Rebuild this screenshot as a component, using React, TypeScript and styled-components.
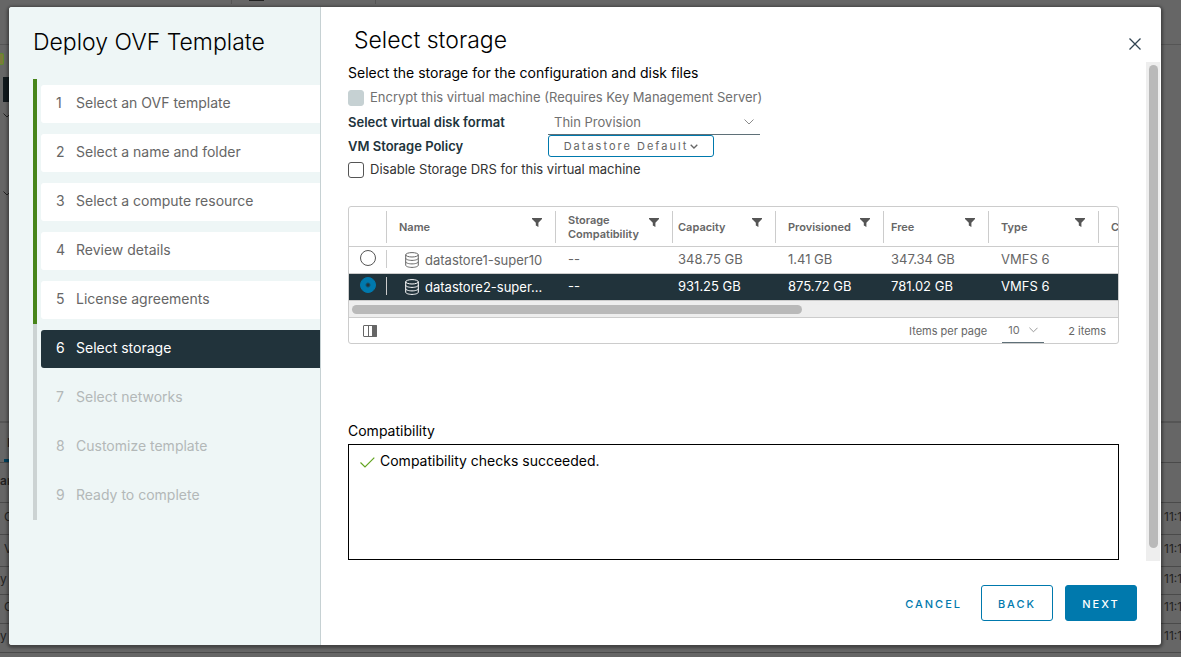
import React, { useState } from "react";
import styled, { createGlobalStyle } from "styled-components";

const GlobalStyle = createGlobalStyle`
  *, *::before, *::after { box-sizing: border-box; }
  body {
    margin: 0;
    background: #666;
    color: #000;
    font: 14px/24px Inter, "Open Sans", "Liberation Sans", sans-serif;
  }
  button, input, select { font: inherit; margin: 0; }
`;

const Page = styled.div`
  position: relative;
  display: flex;
  min-height: 100vh;
  padding: 7px 20px 12px 9px;
`;

/* Dimmed application behind the dialog */
const Backdrop = styled.div`
  position: absolute;
  inset: 0;
  display: flex;
  flex-direction: column;
  overflow: hidden;
  color: #222;
  font-size: 12px;
`;

const BackBar = styled.div`
  display: flex;
  flex: none;
  height: 45px;
  padding-left: 231px;
  border-bottom: 1px solid #555;
`;

const BackTab = styled.div<{ $width: number }>`
  display: flex;
  justify-content: center;
  width: ${(p) => p.$width}px;
  height: 4px;
  border-left: 1px solid #555;
`;

const BackTabMark = styled.div`
  width: 15px;
  height: 1px;
  margin-right: 94px;
  background: #222;
`;

const BackTree = styled.div`
  display: flex;
  flex: none;
  flex-direction: column;
  height: 376px;
  padding-top: 8px;
`;

const BackBadge = styled.div`
  width: 4px;
  height: 12px;
  border: 1px solid #5d8a2c;
  border-left: 0;
  border-radius: 0 2px 2px 0;
  background: #7d7a3a;
`;

const BackSelected = styled.div`
  width: 10px;
  height: 25px;
  margin: 12px 0 0 3px;
  background: #11191d;
`;

const BackChevron = styled.svg`
  flex: none;
  width: 8px;
  height: 5px;
  margin: 11px 0 62px 3px;
`;

const BackTabs = styled.div`
  display: flex;
  flex: none;
  height: 42px;
  border-top: 2px solid #555;
  border-bottom: 1px solid #4a4a4a;
`;

const BackActiveTab = styled.div`
  width: 40px;
  margin-left: 4px;
  padding: 8px 0 0 3px;
  border-bottom: 3px solid #00405c;
  color: #111;
`;

const BackRow = styled.div<{ $height: number; $indent?: boolean; $bold?: boolean }>`
  display: flex;
  flex: none;
  align-items: center;
  justify-content: space-between;
  height: ${(p) => p.$height}px;
  padding: 0 0 4px ${(p) => (p.$indent ? 4 : 0)}px;
  border-bottom: 1px solid #4a4a4a;
  font-weight: ${(p) => (p.$bold ? 600 : 400)};
`;

const BackTime = styled.span`
  width: 17px;
  white-space: nowrap;
`;

const Dialog = styled.div`
  position: relative;
  display: flex;
  flex: 1;
  min-width: 0;
  overflow: hidden;
  border-radius: 3px;
  background: #fff;
  box-shadow: 0 1px 3px 2px rgba(0, 0, 0, 0.35);
`;

const Sidebar = styled.nav`
  flex: none;
  width: 312px;
  padding: 20px 0 0 24px;
  border-right: 1px solid #c6d1d3;
  background: #eef6f6;
`;

const WizardTitle = styled.h1`
  margin: 0 0 22px;
  font-size: 23px;
  font-weight: 300;
  line-height: 30px;
`;

const Steps = styled.ol`
  margin: 0;
  padding: 0;
  list-style: none;
`;

type StepState = "done" | "current" | "todo";

const Step = styled.li<{ $state: StepState }>`
  padding: 6px 0 5px 4px;
  border-left: 4px solid ${(p) => (p.$state === "done" ? "#48851a" : "#ccd3d3")};
`;

const StepButton = styled.button<{ $state: StepState }>`
  display: flex;
  align-items: center;
  width: 100%;
  height: 38px;
  padding: 0 0 2px 15px;
  border: 0;
  border-radius: 3px 0 0 3px;
  background: ${(p) => ({ done: "#fff", current: "#21333b", todo: "transparent" })[p.$state]};
  color: ${(p) => ({ done: "#666", current: "#fff", todo: "#b3b8b8" })[p.$state]};
  font-size: 14px;
  text-align: left;
`;

const StepNumber = styled.span`
  width: 20px;
`;

const Main = styled.main`
  display: flex;
  flex: 1;
  flex-direction: column;
  min-width: 0;
`;

const Header = styled.header`
  display: flex;
  align-items: center;
  justify-content: space-between;
  height: 55px;
  padding: 10px 18px 0 33px;
`;

const PageTitle = styled.h2`
  margin: 0;
  font-size: 23px;
  font-weight: 300;
  line-height: 30px;
`;

const CloseButton = styled.button`
  display: flex;
  padding: 10px 2px 2px;
  border: 0;
  background: none;
`;

const ScrollArea = styled.div`
  display: flex;
  flex: 1;
`;

const Content = styled.div`
  flex: 1;
  min-width: 0;
  padding: 0 27px;
`;

const VerticalTrack = styled.div`
  width: 14px;
  margin-right: 1px;
  padding: 3px 2px 3px 3px;
  background: #eee;
`;

const VerticalThumb = styled.div`
  height: 98%;
  border-radius: 5px;
  background: #b9b9b9;
`;

const Intro = styled.p`
  margin: 0 0 2px;
  line-height: 22px;
`;

const FormRow = styled.div`
  display: flex;
  align-items: center;
  height: 24px;
`;

const CheckRow = styled.label<{ $disabled?: boolean }>`
  display: flex;
  align-items: center;
  gap: 6px;
  height: 24px;
  color: ${(p) => (p.$disabled ? "#707070" : "#333")};
  font-size: 13px;
`;

const CheckText = styled.span`
  padding-bottom: 2px;
  line-height: 20px;
`;

const Checkbox = styled.input`
  appearance: none;
  width: 16px;
  height: 16px;
  border: 1px solid #555;
  border-radius: 3px;
  background: #fff;
  &:disabled {
    border-color: #c6d1d3;
    background: #c6d1d3;
  }
  &:checked {
    border-color: #0079ad;
    background: #0079ad;
  }
`;

const FieldLabel = styled.label`
  width: 200px;
  color: #21333b;
  font-size: 13px;
  font-weight: 600;
`;

const SelectBox = styled.span<{ $width: number }>`
  position: relative;
  display: flex;
  align-items: center;
  width: ${(p) => p.$width}px;
  border-bottom: 1px solid #5f7078;
  color: #8c8c8c;
`;

const SelectChevron = styled.svg`
  position: absolute;
  right: 6px;
  pointer-events: none;
`;

const Select = styled.select<{ $size: number }>`
  appearance: none;
  width: 100%;
  height: 24px;
  padding: 0 6px;
  border: 0;
  background: none;
  color: #707070;
  font-size: ${(p) => p.$size}px;
`;

const PolicyButton = styled.button`
  display: flex;
  align-items: center;
  justify-content: center;
  gap: 2px;
  width: 166px;
  height: 22px;
  padding: 0;
  border: 1px solid #0079ad;
  border-radius: 3px;
  background: #fff;
  color: #666;
  font-size: 11px;
  letter-spacing: 2px;
`;

const Grid = styled.section`
  margin-top: 24px;
  border: 1px solid #ccc;
  border-radius: 3px;
  overflow: hidden;
`;

const Table = styled.table`
  width: 100%;
  border-collapse: collapse;
  table-layout: fixed;
  color: #666;
  font-size: 13px;
`;

const HeadCell = styled.th`
  height: 39px;
  padding: 4px 0 3px;
  border-bottom: 1px solid #ccc;
  font-size: 11px;
  font-weight: 600;
  line-height: 14px;
  text-align: left;
`;

const HeadInner = styled.div<{ $pad: number; $last?: boolean }>`
  display: flex;
  align-items: center;
  justify-content: space-between;
  height: 32px;
  padding: 0 13px 0 ${(p) => p.$pad}px;
  ${(p) => (p.$last ? "padding-right: 0;" : "border-right: 1px solid #ccc;")}
`;

const FilterButton = styled.button`
  display: flex;
  padding: 0 0 10px;
  border: 0;
  background: none;
`;

const Row = styled.tr<{ $selected: boolean }>`
  height: 27px;
  border-bottom: 1px solid #ccc;
  background: ${(p) => (p.$selected ? "#21333b" : "#fff")};
  color: ${(p) => (p.$selected ? "#fff" : "#666")};
`;

const Cell = styled.td<{ $pad: number }>`
  padding: 0 0 2px ${(p) => p.$pad}px;
  line-height: 20px;
  white-space: nowrap;
`;

const RadioWrap = styled.div`
  display: flex;
  align-items: center;
  justify-content: space-between;
  height: 18px;
  padding: 0 0 2px 11px;
  border-right: 1px solid #ccc;
`;

const Radio = styled.input`
  appearance: none;
  width: 16px;
  height: 16px;
  border: 1px solid #555;
  border-radius: 50%;
  background: #fff;
  &:checked {
    border-color: #0079ad;
    background: radial-gradient(circle, #21333b 1px, #0079ad 3px);
  }
`;

const StoreName = styled.div`
  display: flex;
  align-items: center;
  gap: 6px;
  padding: 2px 9px 0 6px;
`;

const HorizontalTrack = styled.div`
  height: 17px;
  padding: 4px 3px;
  border-bottom: 1px solid #ccc;
  background: #eee;
`;

const HorizontalThumb = styled.div`
  width: 59%;
  height: 9px;
  border-radius: 5px;
  background: #b9b9b9;
`;

const GridFooter = styled.footer`
  display: flex;
  align-items: center;
  height: 25px;
  padding: 0 12px 0 14px;
  color: #666;
  font-size: 11px;
`;

const ColumnsButton = styled.button`
  display: flex;
  margin-right: auto;
  padding: 0;
  border: 0;
  background: none;
`;

const PageSize = styled.label`
  display: flex;
  align-items: center;
  gap: 15px;
  margin-right: 24px;
`;

const CompatibilityTitle = styled.h3`
  margin: 74px 0 0;
  font-size: 14px;
  font-weight: 400;
  line-height: 26px;
`;

const CompatibilityBox = styled.div`
  display: flex;
  align-items: flex-start;
  gap: 5px;
  height: 116px;
  padding: 4px 11px;
  border: 1px solid #000;
`;

const CheckIcon = styled.svg`
  margin-top: 8px;
`;

const Actions = styled.footer`
  display: flex;
  gap: 12px;
  padding: 24px;
`;

const ActionButton = styled.button<{ $kind: "flat" | "outline" | "solid" }>`
  width: ${(p) => (p.$kind === "flat" ? "auto" : "72px")};
  height: 36px;
  margin-left: ${(p) => (p.$kind === "flat" ? "auto" : "0")};
  padding: 2px ${(p) => (p.$kind === "flat" ? 6 : 0)}px 0;
  border: 1px solid ${(p) => (p.$kind === "flat" ? "transparent" : "#0079ad")};
  border-radius: 3px;
  background: ${(p) => (p.$kind === "solid" ? "#0079ad" : "#fff")};
  color: ${(p) => (p.$kind === "solid" ? "#fff" : "#0079ad")};
  font-size: 11px;
  font-weight: 500;
  letter-spacing: 2px;
`;

const steps = [
  "Select an OVF template",
  "Select a name and folder",
  "Select a compute resource",
  "Review details",
  "License agreements",
  "Select storage",
  "Select networks",
  "Customize template",
  "Ready to complete",
];

const columns = [
  { label: "Name", width: 169, pad: 12 },
  { label: "Storage Compatibility", width: 117, pad: 12 },
  { label: "Capacity", width: 103, pad: 5 },
  { label: "Provisioned", width: 108, pad: 12 },
  { label: "Free", width: 105, pad: 7 },
  { label: "Type", width: 110, pad: 12 },
];

const datastores = [
  { name: "datastore1-super10", values: ["--", "348.75 GB", "1.41 GB", "347.34 GB", "VMFS 6"] },
  { name: "datastore2-super…", values: ["--", "931.25 GB", "875.72 GB", "781.02 GB", "VMFS 6"] },
];

const backRows = [
  { text: "C", height: 32, indent: true },
  { text: "V", height: 32, indent: true },
  { text: "y C", height: 28 },
  { text: "C", height: 29, indent: true },
  { text: "y C", height: 29 },
];

const FilterIcon = () => (
  <svg width="10" height="9" viewBox="0 0 10 9" fill="#555" aria-hidden="true">
    <path d="M0 0h10v1L6.4 4.8V9L3.8 7.6V4.8L0 1z" />
  </svg>
);

const StoreIcon = () => (
  <svg width="14" height="16" viewBox="0 0 14 16" fill="none" stroke="currentColor" aria-hidden="true">
    <ellipse cx="7" cy="2.8" rx="6.3" ry="2.2" />
    <path d="M.7 2.8v10.4c0 1.2 2.8 2.2 6.3 2.2s6.3-1 6.3-2.2V2.8M.7 6.2c0 1.2 2.8 2.2 6.3 2.2s6.3-1 6.3-2.2M.7 9.7c0 1.2 2.8 2.2 6.3 2.2s6.3-1 6.3-2.2" />
  </svg>
);

export default function App() {
  const [selected, setSelected] = useState(1);
  return (
    <>
      <GlobalStyle />
      <Page>
        <Backdrop aria-hidden="true">
          <BackBar>
            <BackTab $width={144}>
              <BackTabMark />
            </BackTab>
            <BackTab $width={100} />
          </BackBar>
          <BackTree>
            <BackBadge />
            <BackSelected />
            <BackChevron viewBox="0 0 8 5" fill="none" stroke="#222">
              <path d="M.5.5 4 4 7.5.5" />
            </BackChevron>
            <BackChevron viewBox="0 0 8 5" fill="none" stroke="#222">
              <path d="M.5.5 4 4 7.5.5" />
            </BackChevron>
          </BackTree>
          <BackTabs>
            <BackActiveTab>I</BackActiveTab>
          </BackTabs>
          <BackRow $height={40} $bold>
            am
          </BackRow>
          {backRows.map((row, i) => (
            <BackRow key={i} $height={row.height} $indent={row.indent}>
              <span>{row.text}</span>
              <BackTime>11:1</BackTime>
            </BackRow>
          ))}
        </Backdrop>

        <Dialog role="dialog" aria-labelledby="wizard-title">
          <Sidebar>
            <WizardTitle id="wizard-title">Deploy OVF Template</WizardTitle>
            <Steps>
              {steps.map((label, i) => {
                const state: StepState = i < 5 ? "done" : i === 5 ? "current" : "todo";
                return (
                  <Step key={label} $state={state}>
                    <StepButton type="button" $state={state} disabled={state === "todo"}>
                      <StepNumber>{i + 1}</StepNumber>
                      {label}
                    </StepButton>
                  </Step>
                );
              })}
            </Steps>
          </Sidebar>

          <Main>
            <Header>
              <PageTitle>Select storage</PageTitle>
              <CloseButton type="button" aria-label="Close">
                <svg width="12" height="12" viewBox="0 0 12 12" stroke="#314351" strokeWidth="1.3">
                  <path d="M.5.5l11 11M11.5.5l-11 11" />
                </svg>
              </CloseButton>
            </Header>

            <ScrollArea>
              <Content>
                <Intro>Select the storage for the configuration and disk files</Intro>
                <CheckRow $disabled>
                  <Checkbox type="checkbox" disabled />
                  <CheckText>Encrypt this virtual machine (Requires Key Management Server)</CheckText>
                </CheckRow>
                <FormRow>
                  <FieldLabel htmlFor="disk-format">Select virtual disk format</FieldLabel>
                  <SelectBox $width={212}>
                    <Select id="disk-format" $size={13}>
                      <option>Thin Provision</option>
                    </Select>
                    <SelectChevron width="10" height="6" viewBox="0 0 10 6" fill="none" stroke="currentColor">
                      <path d="M.5.5 5 5 9.5.5" />
                    </SelectChevron>
                  </SelectBox>
                </FormRow>
                <FormRow>
                  <FieldLabel htmlFor="storage-policy">VM Storage Policy</FieldLabel>
                  <PolicyButton id="storage-policy" type="button">
                    Datastore Default
                    <svg width="8" height="5" viewBox="0 0 8 5" fill="none" stroke="currentColor" strokeWidth="1.3">
                      <path d="M.7.7 4 4 7.3.7" />
                    </svg>
                  </PolicyButton>
                </FormRow>
                <CheckRow>
                  <Checkbox type="checkbox" />
                  <CheckText>Disable Storage DRS for this virtual machine</CheckText>
                </CheckRow>

                <Grid>
                  <Table>
                    <colgroup>
                      <col width={38} />
                      {columns.map((c) => (
                        <col key={c.label} width={c.width} />
                      ))}
                      <col />
                    </colgroup>
                    <thead>
                      <tr>
                        <HeadCell>
                          <HeadInner $pad={0} />
                        </HeadCell>
                        {columns.map((c) => (
                          <HeadCell key={c.label}>
                            <HeadInner $pad={c.pad}>
                              {c.label}
                              <FilterButton type="button" aria-label={`Filter ${c.label}`}>
                                <FilterIcon />
                              </FilterButton>
                            </HeadInner>
                          </HeadCell>
                        ))}
                        <HeadCell>
                          <HeadInner $pad={12} $last>
                            C
                          </HeadInner>
                        </HeadCell>
                      </tr>
                    </thead>
                    <tbody>
                      {datastores.map((store, i) => (
                        <Row key={store.name} $selected={i === selected}>
                          <Cell $pad={0}>
                            <RadioWrap>
                              <Radio
                                type="radio"
                                name="datastore"
                                aria-label={store.name}
                                checked={i === selected}
                                onChange={() => setSelected(i)}
                              />
                            </RadioWrap>
                          </Cell>
                          <Cell $pad={12}>
                            <StoreName>
                              <StoreIcon />
                              {store.name}
                            </StoreName>
                          </Cell>
                          {store.values.map((value, j) => (
                            <Cell key={j} $pad={columns[j + 1].pad}>
                              {value}
                            </Cell>
                          ))}
                          <Cell $pad={0} />
                        </Row>
                      ))}
                    </tbody>
                  </Table>
                  <HorizontalTrack>
                    <HorizontalThumb />
                  </HorizontalTrack>
                  <GridFooter>
                    <ColumnsButton type="button" aria-label="Show columns">
                      <svg width="14" height="12" viewBox="0 0 14 12" fill="none" stroke="#666">
                        <rect x=".5" y=".5" width="13" height="11" rx=".5" />
                        <path d="M5.5 .5v11" />
                        <path d="M9.5 .5h4v11h-4z" fill="#666" />
                      </svg>
                    </ColumnsButton>
                    <PageSize>
                      Items per page
                      <SelectBox $width={42}>
                        <Select $size={11}>
                          <option>10</option>
                        </Select>
                        <SelectChevron width="9" height="6" viewBox="0 0 10 6" fill="none" stroke="currentColor">
                          <path d="M.5.5 5 5 9.5.5" />
                        </SelectChevron>
                      </SelectBox>
                    </PageSize>
                    2 items
                  </GridFooter>
                </Grid>

                <CompatibilityTitle>Compatibility</CompatibilityTitle>
                <CompatibilityBox>
                  <CheckIcon width="15" height="11" viewBox="0 0 15 11" fill="none" stroke="#62a420" strokeWidth="1.2">
                    <path d="M.5 5.5 5 10 14.3.7" />
                  </CheckIcon>
                  Compatibility checks succeeded.
                </CompatibilityBox>
              </Content>
              <VerticalTrack>
                <VerticalThumb />
              </VerticalTrack>
            </ScrollArea>

            <Actions>
              <ActionButton type="button" $kind="flat">
                CANCEL
              </ActionButton>
              <ActionButton type="button" $kind="outline">
                BACK
              </ActionButton>
              <ActionButton type="button" $kind="solid">
                NEXT
              </ActionButton>
            </Actions>
          </Main>
        </Dialog>
      </Page>
    </>
  );
}
